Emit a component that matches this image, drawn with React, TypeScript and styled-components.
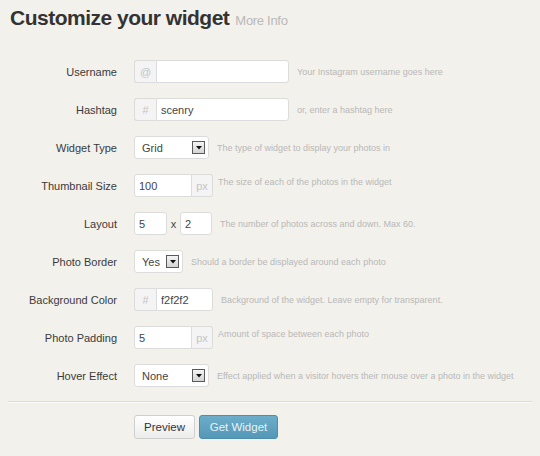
import React from 'react';
import styled, { createGlobalStyle } from 'styled-components';

const GlobalStyle = createGlobalStyle`
    html, body {
        margin: 0;
        padding: 0;
        background: #f3f1ec;
    }
    body {
        font-family: 'Liberation Sans', Arial, sans-serif;
        color: #333;
    }
`;

type Row = {
    label: string;
    help: string;
    control: React.ReactNode;
    tight?: boolean;
};

const Arrow: React.FC = () => (
    <ArrowBox>
        <svg width="6" height="4" viewBox="0 0 6 4">
            <path d="M0 0H6L3 3.5Z" fill="#111" />
        </svg>
    </ArrowBox>
);

const App: React.FC = () => {
    const rows: Row[] = [
        {
            label: 'Username',
            help: 'Your Instagram username goes here',
            control: (
                <Group>
                    <Prefix>@</Prefix>
                    <Field $w={133} $joined="left" defaultValue="" />
                </Group>
            ),
        },
        {
            label: 'Hashtag',
            help: 'or, enter a hashtag here',
            control: (
                <Group>
                    <Prefix>#</Prefix>
                    <Field $w={133} $joined="left" defaultValue="scenry" />
                </Group>
            ),
        },
        {
            label: 'Widget Type',
            help: 'The type of widget to display your photos in',
            control: <Select $w={75}>Grid<Arrow /></Select>,
        },
        {
            label: 'Thumbnail Size',
            help: 'The size of each of the photos in the widget',
            tight: true,
            control: (
                <Group>
                    <Field $w={58} $joined="right" defaultValue="100" />
                    <Suffix>px</Suffix>
                </Group>
            ),
        },
        {
            label: 'Layout',
            help: 'The number of photos across and down. Max 60.',
            control: (
                <Group>
                    <Field $w={33} defaultValue="5" />
                    <Times>x</Times>
                    <Field $w={32} defaultValue="2" />
                </Group>
            ),
        },
        {
            label: 'Photo Border',
            help: 'Should a border be displayed around each photo',
            control: <Select $w={49}>Yes<Arrow /></Select>,
        },
        {
            label: 'Background Color',
            help: 'Background of the widget. Leave empty for transparent.',
            control: (
                <Group>
                    <Prefix>#</Prefix>
                    <Field $w={57} $joined="left" defaultValue="f2f2f2" />
                </Group>
            ),
        },
        {
            label: 'Photo Padding',
            help: 'Amount of space between each photo',
            tight: true,
            control: (
                <Group>
                    <Field $w={58} $joined="right" defaultValue="5" />
                    <Suffix>px</Suffix>
                </Group>
            ),
        },
        {
            label: 'Hover Effect',
            help: 'Effect applied when a visitor hovers their mouse over a photo in the widget',
            control: <Select $w={75}>None<Arrow /></Select>,
        },
    ];

    return (
        <Page>
            <GlobalStyle />
            <Header>
                <Title>Customize your widget</Title>
                <MoreInfo>More Info</MoreInfo>
            </Header>
            <Form>
                {rows.map((row) => (
                    <FormRow key={row.label}>
                        <Label>{row.label}</Label>
                        {row.control}
                        <Help $tight={row.tight}>{row.help}</Help>
                    </FormRow>
                ))}
            </Form>
            <Divider />
            <Actions>
                <PreviewButton>Preview</PreviewButton>
                <PrimaryButton>Get Widget</PrimaryButton>
            </Actions>
        </Page>
    );
};

const Page = styled.div`
    width: 540px;
    height: 456px;
    padding: 0 8px;
    box-sizing: border-box;
    overflow: hidden;
`;

const Header = styled.div`
    display: flex;
    align-items: baseline;
    gap: 6px;
    padding: 5px 0 0 2px;
    height: 55px;
    box-sizing: border-box;
`;

const Title = styled.h1`
    margin: 0;
    font-size: 21px;
    line-height: 26px;
    font-weight: bold;
    letter-spacing: -0.5px;
    color: #333;
`;

const MoreInfo = styled.a`
    font-size: 13px;
    color: #b9b9b9;
    letter-spacing: -0.3px;
    cursor: pointer;
`;

const Form = styled.div`
    display: flex;
    flex-direction: column;
    gap: 15px;
    padding-top: 5px;
`;

const FormRow = styled.div`
    display: flex;
    align-items: center;
    height: 23px;
    gap: 8px;
`;

const Label = styled.div`
    width: 109px;
    margin-right: 9px;
    text-align: right;
    font-size: 11px;
    color: #3a3a3a;
    white-space: nowrap;
`;

const Help = styled.div<{ $tight?: boolean }>`
    font-size: 9px;
    color: #b8b8b8;
    white-space: nowrap;
    margin-left: ${({ $tight }) => ($tight ? '-3px' : '0')};
    align-self: ${({ $tight }) => ($tight ? 'flex-start' : 'center')};
    margin-top: ${({ $tight }) => ($tight ? '3px' : '0')};
`;

const Group = styled.div`
    display: flex;
    align-items: stretch;
    height: 23px;
`;

const Field = styled.input<{ $w: number; $joined?: 'left' | 'right' }>`
    width: ${({ $w }) => $w}px;
    height: 23px;
    box-sizing: border-box;
    border: 1px solid #dcdcdc;
    border-radius: ${({ $joined }) =>
        $joined === 'left' ? '0 3px 3px 0' : $joined === 'right' ? '3px 0 0 3px' : '3px'};
    background: #fff;
    padding: 0 4px;
    font-family: 'Liberation Sans', Arial, sans-serif;
    font-size: 11px;
    color: #444;
    outline: none;
    margin: 0;
`;

const Prefix = styled.span`
    width: 22px;
    box-sizing: border-box;
    display: flex;
    align-items: center;
    justify-content: center;
    border: 1px solid #dcdcdc;
    border-right: none;
    border-radius: 3px 0 0 3px;
    background: #f4f4f4;
    color: #c4c4c4;
    font-size: 11px;
`;

const Suffix = styled(Prefix)`
    width: 21px;
    border-right: 1px solid #dcdcdc;
    border-left: none;
    border-radius: 0 3px 3px 0;
`;

const Times = styled.span`
    width: 13px;
    display: flex;
    align-items: center;
    justify-content: center;
    font-size: 11px;
    color: #444;
`;

const Select = styled.div<{ $w: number }>`
    width: ${({ $w }) => $w}px;
    height: 23px;
    box-sizing: border-box;
    border: 1px solid #dcdcdc;
    border-radius: 3px;
    background: #fff;
    display: flex;
    align-items: center;
    justify-content: space-between;
    padding: 0 3px 0 7px;
    font-size: 11px;
    color: #444;
`;

const ArrowBox = styled.span`
    width: 13px;
    height: 13px;
    box-sizing: border-box;
    border: 1px solid #5a5a5a;
    background: linear-gradient(#f4f4f4, #d4d4d4);
    display: flex;
    align-items: center;
    justify-content: center;
`;

const Divider = styled.div`
    height: 1px;
    background: #dddcd8;
    border-bottom: 1px solid #fbfaf8;
    margin-top: 14px;
`;

const Actions = styled.div`
    display: flex;
    gap: 4px;
    padding: 12px 0 0 126px;
`;

const BaseButton = styled.button`
    height: 24px;
    box-sizing: border-box;
    border-radius: 3px;
    font-family: 'Liberation Sans', Arial, sans-serif;
    font-size: 11.5px;
    padding: 0;
    cursor: pointer;
`;

const PreviewButton = styled(BaseButton)`
    width: 61px;
    border: 1px solid #cfcfcf;
    background: linear-gradient(#ffffff, #ececec);
    color: #333;
`;

const PrimaryButton = styled(BaseButton)`
    width: 79px;
    border: 1px solid #4f8eab;
    background: linear-gradient(#6badca, #5597b6);
    color: #e8f2f6;
`;

export default App;
